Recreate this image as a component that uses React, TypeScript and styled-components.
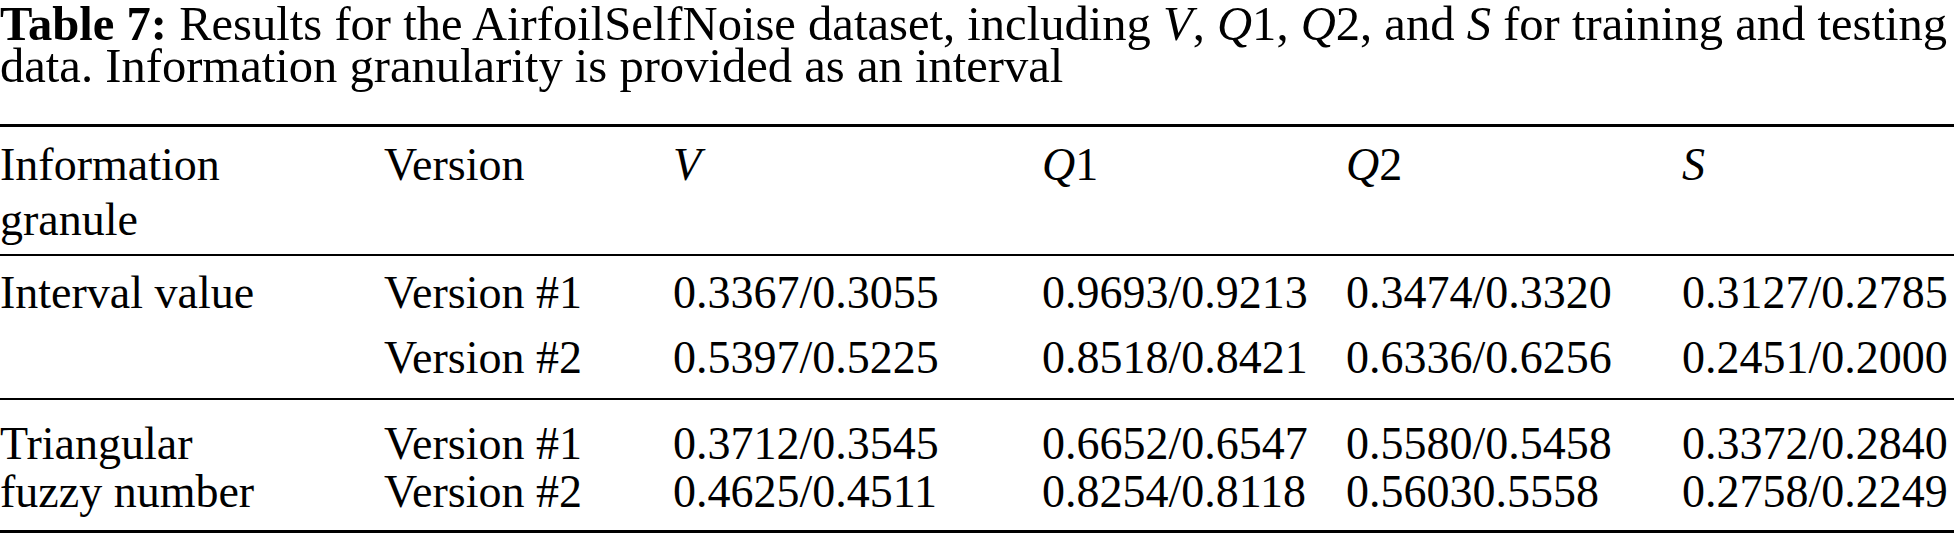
import React from 'react';
import styled, { createGlobalStyle } from 'styled-components';

const Global = createGlobalStyle`
  html, body {
    margin: 0;
    padding: 0;
    background: #fff;
  }
  body {
    font-family: "Liberation Serif", "Times New Roman", serif;
    color: #000;
  }
`;

const Page = styled.div`
  width: 1954px;
  font-size: 46px;
`;

const Caption = styled.div`
  font-size: 48.6px;
  line-height: 42px;
  white-space: nowrap;
  padding-top: 3px;
  margin-bottom: 37px;

  b {
    font-weight: bold;
  }
`;

const Table = styled.div`
  border-top: 3px solid #000;
  border-bottom: 3px solid #000;
`;

// one band of the table between two rules
const Group = styled.div<{ $lh: number; $gap: number; $pt: number; $pb: number; $last?: boolean }>`
  display: grid;
  grid-template-columns: 384px 289px 369px 304px 336px 1fr;
  row-gap: ${p => p.$gap}px;
  line-height: ${p => p.$lh}px;
  padding: ${p => p.$pt}px 0 ${p => p.$pb}px;
  border-bottom: ${p => (p.$last ? 'none' : '2px solid #000')};
  white-space: nowrap;
`;

const Label = styled.div`
  grid-row: span 2;
`;

const Cell = styled.div``;

const M = styled.i`
  font-style: italic;
`;

type Row = { version: string; vals: string[] };
type Band = { label: React.ReactNode; lh: number; gap: number; pt: number; pb: number; rows: Row[] };

const bands: Band[] = [
  {
    label: 'Interval value',
    lh: 50,
    gap: 15,
    pt: 12,
    pb: 15,
    rows: [
      { version: 'Version #1', vals: ['0.3367/0.3055', '0.9693/0.9213', '0.3474/0.3320', '0.3127/0.2785'] },
      { version: 'Version #2', vals: ['0.5397/0.5225', '0.8518/0.8421', '0.6336/0.6256', '0.2451/0.2000'] },
    ],
  },
  {
    label: (
      <>
        Triangular
        <br />
        fuzzy number
      </>
    ),
    lh: 48,
    gap: 0,
    pt: 20,
    pb: 14,
    rows: [
      { version: 'Version #1', vals: ['0.3712/0.3545', '0.6652/0.6547', '0.5580/0.5458', '0.3372/0.2840'] },
      { version: 'Version #2', vals: ['0.4625/0.4511', '0.8254/0.8118', '0.56030.5558', '0.2758/0.2249'] },
    ],
  },
];

export default function App() {
  return (
    <Page>
      <Global />
      <Caption>
        <b>Table 7:</b> Results for the AirfoilSelfNoise dataset, including <M>V</M>, <M>Q</M>1, <M>Q</M>2, and{' '}
        <M>S</M> for training and testing
        <br />
        data. Information granularity is provided as an interval
      </Caption>
      <Table>
        <Group $lh={55} $gap={0} $pt={10} $pb={7}>
          <Label>
            Information
            <br />
            granule
          </Label>
          <Cell>Version</Cell>
          <Cell>
            <M>V</M>
          </Cell>
          <Cell>
            <M>Q</M>1
          </Cell>
          <Cell>
            <M>Q</M>2
          </Cell>
          <Cell>
            <M>S</M>
          </Cell>
        </Group>
        {bands.map((b, i) => (
          <Group key={i} $lh={b.lh} $gap={b.gap} $pt={b.pt} $pb={b.pb} $last={i === bands.length - 1}>
            <Label>{b.label}</Label>
            {b.rows.map(r => (
              <React.Fragment key={r.version}>
                <Cell>{r.version}</Cell>
                {r.vals.map((v, j) => (
                  <Cell key={j}>{v}</Cell>
                ))}
              </React.Fragment>
            ))}
          </Group>
        ))}
      </Table>
    </Page>
  );
}
